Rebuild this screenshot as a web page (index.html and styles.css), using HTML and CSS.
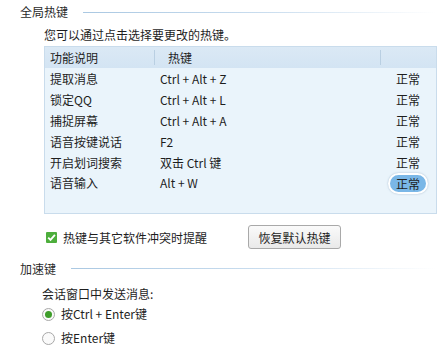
FILE: index.html
```html
<!DOCTYPE html>
<html>
<head>
<meta charset="utf-8">
<link rel="stylesheet" href="styles.css">
</head>
<body>
<div class="page">
  <div class="sec-title sec1"><span>全局热键</span><i class="rule"></i></div>
  <div class="hint">您可以通过点击选择要更改的热键。</div>
  <div class="table">
    <div class="row head">
      <div class="c1">功能说明</div>
      <div class="c2">热键</div>
      <div class="c3"></div>
    </div>
    <div class="row"><div class="c1">提取消息</div><div class="c2">Ctrl + Alt + Z</div><div class="c3"><span class="st">正常</span></div></div>
    <div class="row"><div class="c1">锁定QQ</div><div class="c2">Ctrl + Alt + L</div><div class="c3"><span class="st">正常</span></div></div>
    <div class="row"><div class="c1">捕捉屏幕</div><div class="c2">Ctrl + Alt + A</div><div class="c3"><span class="st">正常</span></div></div>
    <div class="row"><div class="c1">语音按键说话</div><div class="c2">F2</div><div class="c3"><span class="st">正常</span></div></div>
    <div class="row"><div class="c1">开启划词搜索</div><div class="c2">双击 Ctrl 键</div><div class="c3"><span class="st">正常</span></div></div>
    <div class="row"><div class="c1">语音输入</div><div class="c2">Alt + W</div><div class="c3"><span class="st sel">正常</span></div></div>
  </div>
  <div class="opts">
    <label class="chk"><span class="box"><svg width="11" height="11" viewBox="0 0 11 11"><path d="M2.2 5.6 L4.5 7.9 L8.9 2.8" fill="none" stroke="#fff" stroke-width="1.8"/></svg></span>热键与其它软件冲突时提醒</label>
    <button class="btn">恢复默认热键</button>
  </div>
  <div class="sec-title sec2"><span>加速键</span><i class="rule"></i></div>
  <div class="send">会话窗口中发送消息:</div>
  <div class="radio r1"><span class="dot on"></span>按Ctrl + Enter键</div>
  <div class="radio r2"><span class="dot"></span>按Enter键</div>
</div>
</body>
</html>
```
FILE: styles.css
```css
html, body { margin: 0; padding: 0; background: #fff; }
body {
  font-family: "Noto Sans CJK SC", "Noto Sans", sans-serif;
  font-size: 12px;
  color: #1e1e1e;
  width: 446px; height: 346px; overflow: hidden;
}
.page { padding-top: 5px; }
.sec-title { display: flex; align-items: center; height: 14px; line-height: 14px; }
.sec-title span { color: #2b2b2b; }
.sec1 { padding-left: 20px; }
.sec1 .rule { margin-left: 15px; }
.sec2 { padding-left: 20px; margin-top: 13px; }
.sec2 .rule { margin-left: 15px; margin-top: -2px; }
.rule {
  flex: 1; height: 1px; margin-right: 10px;
  background: linear-gradient(to right, #aac8e2 0%, #c8dcee 50%, rgba(255,255,255,0) 100%);
}
.hint { margin: 8px 0 0 44px; height: 16px; line-height: 16px; }
.table {
  margin: 3px 0 0 44px; width: 391px; height: 166px; overflow: hidden;
  border: 1px solid #c9dcec; background: #eaf4fb;
}
.row { display: flex; height: 20.8px; line-height: 20px; align-items: center; overflow: visible; }
.row > div { height: 20px; display: flex; align-items: center; }
.row.head {
  background: linear-gradient(#dbe9f5, #d3e4f3);
  height: 21px; margin-bottom: 1px;
}
.c1 { width: 110px; padding-left: 5px; box-sizing: border-box; }
.c2 { width: 226px; padding-left: 5px; box-sizing: border-box; }
.c3 { flex: 1; padding-left: 15px; box-sizing: border-box; }
.head .c1 { width: 109px; }
.head .c2 { padding-left: 13px; border-left: 1px solid #b9cfe2; height: 15px; }
.head .c3 { border-left: 1px solid #b9cfe2; height: 15px; }
.st { display: inline-block; line-height: 20px; }
.st.sel {
  background: #7ab7e7; border: 2px solid #fff; border-radius: 11px;
  padding: 0 6px; margin-left: -8px; line-height: 17px; height: 17px;
  box-shadow: 0 0 2px rgba(120,150,180,0.6);
}
.opts { display: flex; align-items: center; margin-top: 11px; height: 24px; }
.chk { display: flex; align-items: center; margin-left: 46px; width: 202px; }
.box {
  width: 11px; height: 11px; background: #4dae3c; display: inline-flex;
  margin-right: 6px; border-radius: 1px;
}
.btn {
  font: inherit; font-size: 12px; color: #1e1e1e;
  width: 93px; height: 24px; padding: 0;
  border: 1px solid #a9a9a9; border-radius: 3px;
  background: linear-gradient(#fafafa, #e9e9e9);
}
.send { margin: 10px 0 0 42px; height: 16px; line-height: 16px; }
.radio { display: flex; align-items: center; margin-left: 42px; height: 16px; line-height: 16px; }
.r1 { margin-top: 4px; }
.r2 { margin-top: 8px; }
.dot {
  width: 11px; height: 11px; border-radius: 50%; border: 1px solid #a8a8a8;
  background: #fafafa; margin-right: 6px; position: relative; flex: none;
}
.dot.on::after {
  content: ""; position: absolute; left: 2px; top: 2px; width: 7px; height: 7px;
  border-radius: 50%; background: #3e9d2a;
}
```
